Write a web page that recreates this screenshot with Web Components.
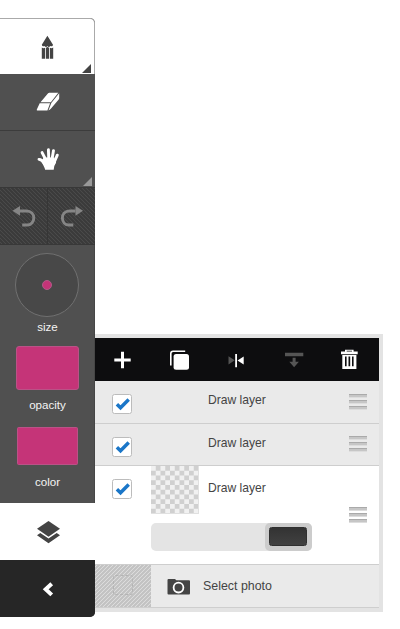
<!DOCTYPE html>
<html lang="en"><head><meta charset="utf-8"><title>Layers</title>
<style>
body{margin:0;background:#fff;font:12px/16px "Liberation Sans",Arial,sans-serif;height:629px;overflow:hidden}
</style></head><body>
<paint-app></paint-app>
<script>
const define=(name,html)=>customElements.define(name,class extends HTMLElement{
  constructor(){super();this.attachShadow({mode:'open'}).innerHTML='<style>*{box-sizing:border-box}svg{display:block}</style>'+html;}
});
const icons={
 pencil:['31 30 32 32','<g fill="#444"><path d="M47.4 34.8L53 43.8Q52.6 46.2 50.3 44.9Q48.8 46.8 47.4 45Q46 46.8 44.5 44.9Q42.4 46.2 41.8 43.8Z"/><path d="M41.8 46.6Q43.5 47.8 45.2 46.8V57.7H41.8ZM46 46.8L47.5 45.9L49.1 46.8V57.7H46ZM49.9 46.8Q51.5 47.8 53.2 46.6V57.7H49.9Z"/></g>'],
 eraser:['31.5 86.5 32 32','<path fill="#fff" d="M40 102.8L47.6 93.8Q48 93.3 48.7 93.3H57.8L50.3 102.8ZM39.2 103.8H49.6L46.9 111H36.8Q36 111 36.3 110ZM50.8 103.4L58.7 93.7V98.5Q58.7 99.5 58 100.3L50.3 109.2Q49.2 110.6 48 110.9Z"/>'],
 hand:['31.5 143 32 32','<g fill="none" stroke="#fff" stroke-width="2.9" stroke-linecap="round"><path d="M38.5 159.4Q41.5 159.5 44 163.5M41.6 152.6L45.4 160M47.9 149.6L48.3 160M53 150.6L51.4 160M56.8 155.2L53.4 163"/></g><path fill="#fff" d="M43.2 157.5H53.8L55.6 162.5Q53.7 165 53.2 169.7H44.6Q44.2 167.3 40.7 161.5Z"/>'],
 undo:['8 199.5 32 32','<path fill="#858585" d="M12.5 210.3L20 205.5V215.2Z"/><path fill="none" stroke="#858585" stroke-width="2.9" d="M20 210.5H26.5C31 210.5 33.8 213.7 33.8 217.5S31 224.5 27 224.5H22.2"/>'],
 redo:['55.5 199.5 32 32','<path fill="#858585" d="M82.5 210.3L75 205.5V215.2Z"/><path fill="none" stroke="#858585" stroke-width="2.9" d="M75 210.5H69C64.5 210.5 61.9 213.7 61.9 217.5S64.5 224.5 68.5 224.5H72.8"/>'],
 layers:['32 516 32 32','<g fill="#444"><path d="M48.5 521L60 528.7L48.5 536.7L37 528.7Z"/><path d="M37 535.2L40.3 533L48.5 538.6L56.7 533L60 535.2L48.5 543.2Z"/></g>'],
 back:['31.5 572.5 32 32','<path fill="none" stroke="#fff" stroke-width="4" d="M51.2 583.2L45.2 588.8L51.2 594.4"/>'],
 plus:['106 344 32 32','<path fill="#fff" d="M121 351.7h3v6.8h6.7v3H124v6.8h-3v-6.8h-6.7v-3h6.7z"/>'],
 copy:['163 344 32 32','<path fill="none" stroke="#fff" stroke-width="1.6" d="M170.8 365.5V353.5Q170.8 351.2 173.1 351.2H185.2"/><rect x="173.6" y="354" width="15.4" height="15.8" rx="2.5" fill="#fff"/>'],
 flip:['220 344 32 32','<path fill="#555" d="M228.5 356.3L234.7 360.3L228.5 364.4Z"/><path fill="#fff" d="M235.2 354H237V367.3H235.2ZM237.5 360.5L243.7 356.5V364.5Z"/>'],
 merge:['277 344 32 32','<path fill="#555" d="M285 352.8H303.3V356.2H285ZM292.6 357.8H295.6V361.8H298.9L294.1 367.3L289.3 361.8H292.6Z"/>'],
 trash:['333 344 32 32','<path fill="#fff" d="M345 351.6V349.8H353.6V351.6H357.7V354.2H341V351.6ZM346.7 351.6H352V350.8H346.7Z"/><path fill="#fff" fill-rule="evenodd" d="M342.3 355H356.4V369H342.3ZM345 356.5V366.2H346.6V356.5ZM348.5 356.5V366.2H350.2V356.5ZM352 356.5V366.2H353.6V356.5Z"/>'],
 camera:['163 570 32 32','<path fill="#444" d="M167.5 579Q167.5 578 168.5 578H175L176.3 579.2H189Q190 579.2 190 580.2V592.3Q190 593.5 189 593.5H168.5Q167.5 593.5 167.5 592.5Z"/><circle cx="178.5" cy="586.6" r="4.9" fill="none" stroke="#fff" stroke-width="1.8"/>']
};
customElements.define('ui-icon',class extends HTMLElement{
  constructor(){super();this.attachShadow({mode:'open'});}
  connectedCallback(){const [box,art]=icons[this.getAttribute('name')];
    this.shadowRoot.innerHTML=`<style>:host{display:block;flex:none;width:32px;height:32px}svg{display:block}</style><svg width="32" height="32" viewBox="${box}">${art}</svg>`;}
});
define('tool-button',`<style>
:host{display:flex;align-items:center;justify-content:center;position:relative;height:var(--h,57px);box-sizing:border-box;background:#505050}
:host([border]){border-bottom:1px solid #3c3c3c}
:host([active]){background:#fff}
:host([more])::after{content:"";position:absolute;right:3px;bottom:1px;width:0;height:0;border:solid transparent;border-width:0 0 9px 9px;border-bottom-color:var(--corner,#999)}
:host([hatched]){background:repeating-linear-gradient(45deg,#3a3a3a 0 .6px,#4a4a4a 1.414px,#3a3a3a 2.2px 2.828px)}
</style><slot></slot>`);
define('brush-size',`<style>
:host{display:grid;place-items:center;box-sizing:border-box;width:64px;height:64px;border:1.3px solid #707070;border-radius:50%;background:#484848}
i{width:10px;height:10px;border-radius:50%;background:#c53478;border:1px solid #b15b87}</style><i></i>`);
define('color-swatch',`<style>:host{display:block;box-sizing:border-box;width:var(--w);height:var(--h);border:1px solid #ba5287;border-radius:var(--r,3px);background:#c53478}</style>`);
define('tool-rail',`<style>
:host{display:flex;flex-direction:column;width:95px;height:599px;margin-top:18px;box-sizing:border-box;flex:none;background:#505050;border-radius:0 5px 5px 0;overflow:hidden;color:#f4f4f4}
.first{--h:56px;--corner:#444;border:1px solid #aaa;border-width:1px 1px 0 0;border-radius:0 5px 0 0}
.history{display:grid;grid-template-columns:48px 47px;height:58px;border:1px solid #383838;border-width:1px 0}
.history tool-button{--h:56px}.history tool-button:first-child{border-right:1px solid #363636}
.settings{height:258px;display:flex;flex-direction:column;align-items:center;padding-top:8px;border-right:1px solid #464646}
span{display:block;height:16px;line-height:16px;font-size:11.6px;padding-left:1px}
.collapse{background:#262626}
</style>
<tool-button class="first" active more><ui-icon name="pencil"></ui-icon></tool-button>
<tool-button border><ui-icon name="eraser"></ui-icon></tool-button>
<tool-button more style="--h:56px"><ui-icon name="hand"></ui-icon></tool-button>
<div class="history"><tool-button hatched><ui-icon name="undo"></ui-icon></tool-button><tool-button hatched><ui-icon name="redo"></ui-icon></tool-button></div>
<div class="settings"><brush-size></brush-size><span style="margin-top:2px">size</span>
<color-swatch style="--w:63px;--h:44px;margin-top:11px"></color-swatch><span style="margin-top:7px">opacity</span>
<color-swatch style="--w:61px;--h:38px;--r:1.5px;margin-top:14px"></color-swatch><span style="margin-top:9px">color</span></div>
<tool-button active><ui-icon name="layers"></ui-icon></tool-button>
<tool-button class="collapse"><ui-icon name="back"></ui-icon></tool-button>`);
define('layer-toolbar',`<style>:host{display:flex;box-sizing:border-box;height:43px;background:#0d0d0f;padding:6px 0 0 11px;gap:25px;align-items:flex-start}
ui-icon:last-child{margin-left:-1px}</style>
<ui-icon name="plus"></ui-icon><ui-icon name="copy"></ui-icon><ui-icon name="flip"></ui-icon><ui-icon name="merge"></ui-icon><ui-icon name="trash"></ui-icon>`);
define('check-box',`<style>:host{display:block;flex:none;width:20px;height:20px;box-sizing:border-box;border:1px solid #bcbcbc;border-radius:2.5px;background:#fff}
:host([empty]){background:none;border:1px dashed #b4b4b4}:host([empty]) svg{display:none}</style>
<svg width="18" height="18" viewBox="0 0 18 18"><path d="M3.9 9.3L7.5 12.7L15.7 4.6" fill="none" stroke="#1a76c8" stroke-width="3.5"/></svg>`);
define('drag-handle',`<style>:host{display:flex;flex-direction:column;gap:2px;width:18px}i{height:4px;background:linear-gradient(#aaa 0 1px,#c6c6c6 1px 3px,#ddd 3px)}</style><i></i><i></i><i></i>`);
define('opacity-slider',`<style>:host{display:flex;justify-content:flex-end;width:160.5px;height:28px;background:#e4e4e4;border-radius:5px}
.k{width:47px;height:28px;border-radius:5px;background:#ccc;padding:4px 4.5px 5px}i{display:block;height:19px;border-radius:2.5px;background:linear-gradient(#333,#414141);border:1px solid #303030}</style><div class="k"><i></i></div>`);
define('layer-row',`<style>
:host{display:grid;grid-template-columns:113px 141px 1fr;box-sizing:border-box;height:42.5px;background:#eaeaea;border-bottom:1px solid #cecece;color:#444}
check-box{margin:13px 0 0 17px}span{margin-top:11px;white-space:nowrap;font-size:12.1px}drag-handle{margin-top:12.5px}
</style><check-box></check-box><span><slot></slot></span><drag-handle></drag-handle>`);
define('layer-detail',`<style>
:host{display:grid;grid-template-columns:56px 198px 1fr;box-sizing:border-box;height:99px;background:#fff;border-bottom:1px solid #cecece;color:#444}
check-box{margin:13px 0 0 17px}drag-handle{margin-top:41px}
.top{display:flex;height:57px}.thumb{width:47.5px;height:47.5px;background:repeating-conic-gradient(#d0d0d0 0 25%,#f1f1f1 0 50%) 0 0/9.5px 9.5px}
.name{margin:14px 0 0 9.5px;white-space:nowrap;font-size:12.1px}
</style><check-box></check-box><div><div class="top"><div class="thumb"></div><div class="name"><slot></slot></div></div><opacity-slider></opacity-slider></div><drag-handle></drag-handle>`);
define('photo-row',`<style>
:host{display:flex;box-sizing:border-box;height:43px;background:#eaeaea;border-bottom:1px solid #cecece;color:#444}
.off{width:56px;flex:none;padding:10px 0 0 18px;background:repeating-linear-gradient(135deg,#c2c2c2 0 .6px,#dcdcdc 1.414px,#c2c2c2 2.2px 2.828px)}
ui-icon{margin:6px 8px 0 12px}span{margin-top:13px;white-space:nowrap;font-size:12.4px}
</style><div class="off"><check-box empty></check-box></div><ui-icon name="camera"></ui-icon><span><slot></slot></span>`);
define('layer-panel',`<style>:host{display:block;box-sizing:border-box;width:288px;height:278px;margin-top:334px;background:#e3e3e3;padding:4px 4.5px 0 0}</style>
<layer-toolbar></layer-toolbar><layer-row>Draw layer</layer-row><layer-row>Draw layer</layer-row><layer-detail>Draw layer</layer-detail><photo-row>Select photo</photo-row>`);
define('paint-app',`<style>:host{display:flex;align-items:flex-start}</style><tool-rail></tool-rail><layer-panel></layer-panel>`);
</script></body></html>
